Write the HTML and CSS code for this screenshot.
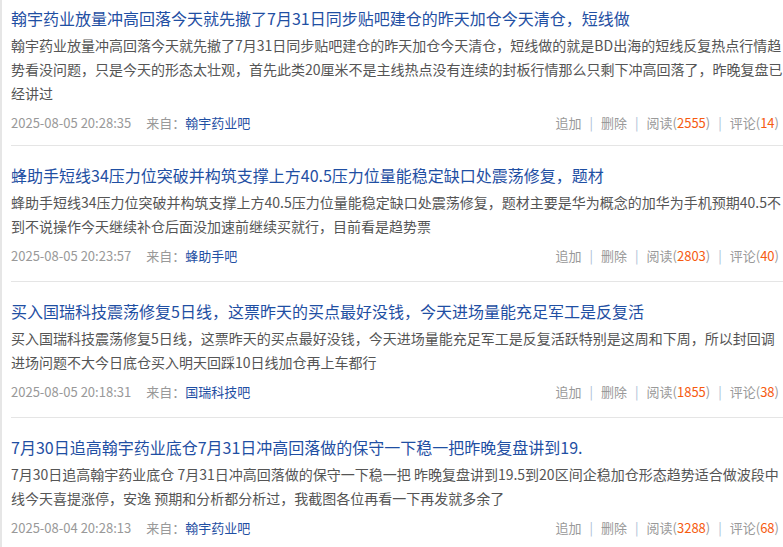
FILE: index.html
```html
<!DOCTYPE html>
<html lang="zh-CN">
<head>
    <meta charset="UTF-8">
    <meta name="viewport" content="width=device-width, initial-scale=1.0">
    <title>我的帖子</title>
    <link rel="stylesheet" href="styles.css">
</head>
<body>
    <div class="post-list">
        <!-- 帖子 1 -->
        <div class="post">
            <a class="post-title" href="#">翰宇药业放量冲高回落今天就先撤了7月31日同步贴吧建仓的昨天加仓今天清仓，短线做</a>
            <p class="post-body">翰宇药业放量冲高回落今天就先撤了7月31日同步贴吧建仓的昨天加仓今天清仓，短线做的就是BD出海的短线反复热点行情趋势看没问题，只是今天的形态太壮观，首先此类20厘米不是主线热点没有连续的封板行情那么只剩下冲高回落了，昨晚复盘已经讲过</p>
            <div class="post-meta">
                <span class="time">2025-08-05 20:28:35</span>
                <span class="from">来自：<a href="#">翰宇药业吧</a></span>
                <span class="actions"><a href="#">追加</a><i>|</i><a href="#">删除</a><i>|</i>阅读(<em>2555</em>)<i>|</i>评论(<em>14</em>)</span>
            </div>
        </div>
        <!-- 帖子 2 -->
        <div class="post">
            <a class="post-title" href="#">蜂助手短线34压力位突破并构筑支撑上方40.5压力位量能稳定缺口处震荡修复，题材</a>
            <p class="post-body">蜂助手短线34压力位突破并构筑支撑上方40.5压力位量能稳定缺口处震荡修复，题材主要是华为概念的加华为手机预期40.5不到不说操作今天继续补仓后面没加速前继续买就行，目前看是趋势票</p>
            <div class="post-meta">
                <span class="time">2025-08-05 20:23:57</span>
                <span class="from">来自：<a href="#">蜂助手吧</a></span>
                <span class="actions"><a href="#">追加</a><i>|</i><a href="#">删除</a><i>|</i>阅读(<em>2803</em>)<i>|</i>评论(<em>40</em>)</span>
            </div>
        </div>
        <!-- 帖子 3 -->
        <div class="post">
            <a class="post-title" href="#">买入国瑞科技震荡修复5日线，这票昨天的买点最好没钱，今天进场量能充足军工是反复活</a>
            <p class="post-body">买入国瑞科技震荡修复5日线，这票昨天的买点最好没钱，今天进场量能充足军工是反复活跃特别是这周和下周，所以封回调进场问题不大今日底仓买入明天回踩10日线加仓再上车都行</p>
            <div class="post-meta">
                <span class="time">2025-08-05 20:18:31</span>
                <span class="from">来自：<a href="#">国瑞科技吧</a></span>
                <span class="actions"><a href="#">追加</a><i>|</i><a href="#">删除</a><i>|</i>阅读(<em>1855</em>)<i>|</i>评论(<em>38</em>)</span>
            </div>
        </div>
        <!-- 帖子 4 -->
        <div class="post">
            <a class="post-title" href="#">7月30日追高翰宇药业底仓7月31日冲高回落做的保守一下稳一把昨晚复盘讲到19.</a>
            <p class="post-body">7月30日追高翰宇药业底仓 7月31日冲高回落做的保守一下稳一把 昨晚复盘讲到19.5到20区间企稳加仓形态趋势适合做波段中线今天喜提涨停，安逸 预期和分析都分析过，我截图各位再看一下再发就多余了</p>
            <div class="post-meta">
                <span class="time">2025-08-04 20:28:13</span>
                <span class="from">来自：<a href="#">翰宇药业吧</a></span>
                <span class="actions"><a href="#">追加</a><i>|</i><a href="#">删除</a><i>|</i>阅读(<em>3288</em>)<i>|</i>评论(<em>68</em>)</span>
            </div>
        </div>
    </div>
</body>
</html>
```

FILE: styles.css
```css
html, body {
    margin: 0;
    padding: 0;
    overflow: hidden;
    background: #fff;
}
body {
    font-family: "Microsoft YaHei", "Noto Sans CJK SC", sans-serif;
    color: #555;
}
a {
    text-decoration: none;
}
.post-list {
    width: 810px;
    border-left: 2px solid #e6e6e6;
}
.post {
    margin-left: 9px;
    padding: 14px 24px 13px 0;
    border-bottom: 1px solid #e5e5e5;
}
.post:first-child {
    padding-top: 3px;
    padding-bottom: 10px;
}
.post-title {
    display: block;
    font-size: 16px;
    line-height: 30px;
    color: #1f4fa3;
    white-space: nowrap;
}
.post-body {
    margin: 0;
    font-size: 14px;
    line-height: 24px;
    color: #555;
}
.post-meta {
    display: flex;
    margin-top: 6px;
    width: 768px;
    font-size: 13px;
    line-height: 24px;
    color: #999;
}
.post-meta .from {
    margin-left: 15px;
}
.post-meta .from a {
    color: #1f4fa3;
}
.post-meta .actions {
    margin-left: auto;
}
.post-meta .actions a {
    color: #999;
}
.post-meta .actions i {
    font-style: normal;
    color: #a9bcd6;
    margin: 0 8px;
}
.post-meta .actions em {
    font-style: normal;
    color: #f65b10;
}
```
